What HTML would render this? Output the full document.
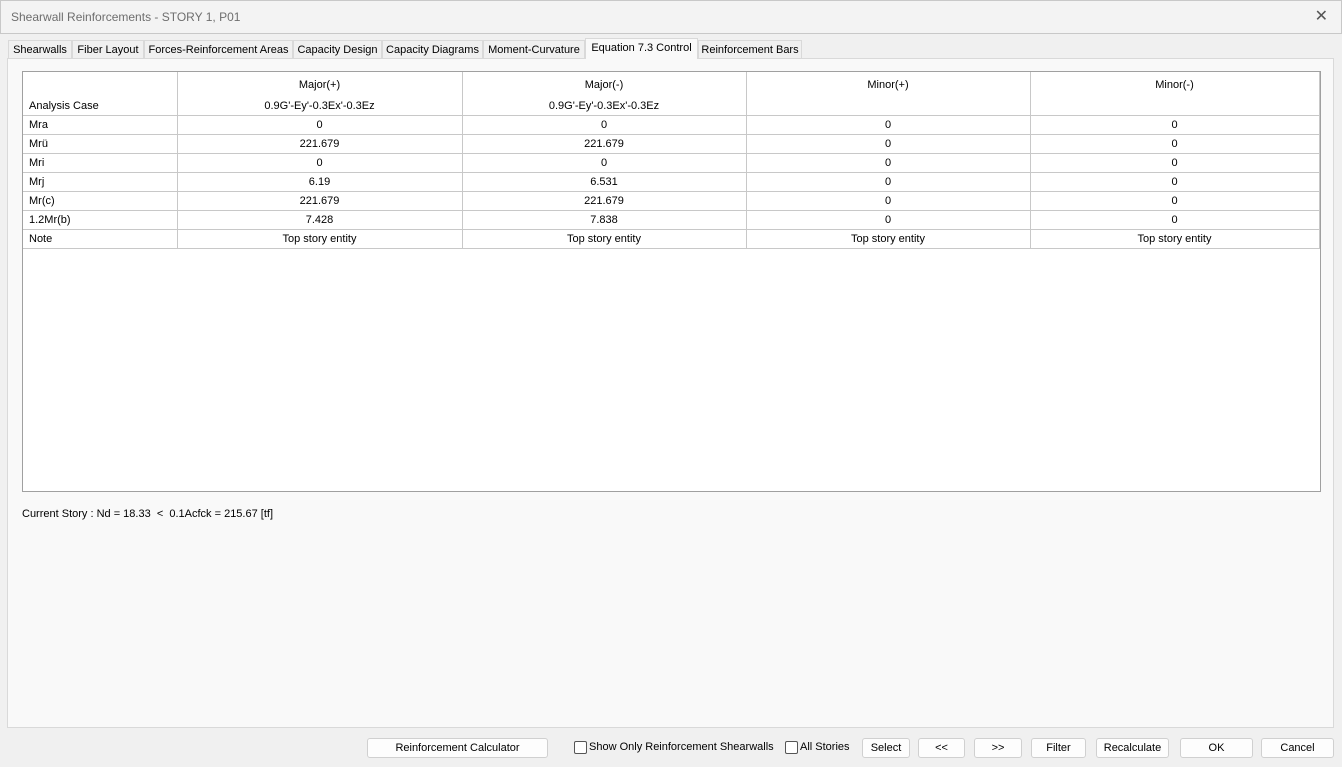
<!DOCTYPE html>
<html><head><style>
body{margin:0;width:1342px;height:767px;background:#f0f0f0;font-family:"Liberation Sans",sans-serif;font-size:11px;color:#000;position:relative;overflow:hidden}
.a{position:absolute}
.title{left:0;top:0;width:1340px;height:32px;background:#f3f3f3;border:1px solid #c8c8c8;}
.title span{position:absolute;left:10px;top:9px;font-size:12px;color:#6e6e6e}
.x{right:14px;top:6px;font-size:16px;color:#555}
.tab{top:40px;height:18px;border:1px solid #d9d9d9;border-bottom:none;background:#f0f0f0;line-height:18px;text-align:center;box-sizing:border-box}
.panel{left:7px;top:58px;width:1327px;height:670px;background:#f9f9f9;border:1px solid #d9d9d9;box-sizing:border-box}
.grid{left:22px;top:71px;width:1299px;height:421px;background:#fff;border:1px solid #a0a0a0;box-sizing:border-box}
table{position:absolute;left:0;top:0;border-collapse:collapse;table-layout:fixed}
td{border:1px solid #c8c8c8;height:18px;padding:0;text-align:center;white-space:nowrap;overflow:hidden}
td:first-child{text-align:left;padding-left:6px}
.btn{top:738px;height:20px;background:#fdfdfd;border:1px solid #d0d0d0;border-radius:3px;box-sizing:border-box;text-align:center;line-height:18px}
.cb{top:741px;width:11px;height:11px;border:1px solid #555;border-radius:2px;background:#fff}
</style></head><body>
<div class="a title"><span>Shearwall Reinforcements - STORY 1, P01</span></div>
<div class="a x">✕</div>
<div class="a panel"></div>
<div class="a tab" style="left:8px;width:64px">Shearwalls</div>
<div class="a tab" style="left:72px;width:72px">Fiber Layout</div>
<div class="a tab" style="left:144px;width:149px">Forces-Reinforcement Areas</div>
<div class="a tab" style="left:293px;width:89px">Capacity Design</div>
<div class="a tab" style="left:382px;width:101px">Capacity Diagrams</div>
<div class="a tab" style="left:483px;width:102px">Moment-Curvature</div>
<div class="a tab" style="left:585px;top:38px;height:21px;width:113px;background:#f9f9f9">Equation 7.3 Control</div>
<div class="a tab" style="left:698px;width:104px">Reinforcement Bars</div>
<div class="a grid">
<table>
<colgroup><col style="width:154px"><col style="width:285px"><col style="width:284px"><col style="width:284px"><col style="width:289px"></colgroup>
<tr><td style="height:25px;border-top:none;border-left:none;border-bottom:none"></td><td style="border-top:none;border-bottom:none">Major(+)</td><td style="border-top:none;border-bottom:none">Major(-)</td><td style="border-top:none;border-bottom:none">Minor(+)</td><td style="border-top:none;border-bottom:none">Minor(-)</td></tr>
<tr><td style="border-left:none;border-top:none">Analysis Case</td><td style="border-top:none">0.9G'-Ey'-0.3Ex'-0.3Ez</td><td style="border-top:none">0.9G'-Ey'-0.3Ex'-0.3Ez</td><td style="border-top:none"></td><td style="border-top:none"></td></tr>
<tr><td style="border-left:none">Mra</td><td>0</td><td>0</td><td>0</td><td>0</td></tr>
<tr><td style="border-left:none">Mrü</td><td>221.679</td><td>221.679</td><td>0</td><td>0</td></tr>
<tr><td style="border-left:none">Mri</td><td>0</td><td>0</td><td>0</td><td>0</td></tr>
<tr><td style="border-left:none">Mrj</td><td>6.19</td><td>6.531</td><td>0</td><td>0</td></tr>
<tr><td style="border-left:none">Mr(c)</td><td>221.679</td><td>221.679</td><td>0</td><td>0</td></tr>
<tr><td style="border-left:none">1.2Mr(b)</td><td>7.428</td><td>7.838</td><td>0</td><td>0</td></tr>
<tr><td style="border-left:none">Note</td><td>Top story entity</td><td>Top story entity</td><td>Top story entity</td><td>Top story entity</td></tr>
</table>
</div>
<div class="a" style="left:22px;top:508px">Current Story : Nd = 18.33 &nbsp;&lt;&nbsp; 0.1Acfck = 215.67 [tf]</div>
<div class="a btn" style="left:367px;width:181px">Reinforcement Calculator</div>
<div class="a cb" style="left:574px"></div><div class="a" style="left:589px;top:741px">Show Only Reinforcement Shearwalls</div>
<div class="a cb" style="left:785px"></div><div class="a" style="left:800px;top:741px">All Stories</div>
<div class="a btn" style="left:862px;width:48px">Select</div>
<div class="a btn" style="left:918px;width:47px">&lt;&lt;</div>
<div class="a btn" style="left:974px;width:48px">&gt;&gt;</div>
<div class="a btn" style="left:1031px;width:55px">Filter</div>
<div class="a btn" style="left:1096px;width:73px">Recalculate</div>
<div class="a btn" style="left:1180px;width:73px">OK</div>
<div class="a btn" style="left:1261px;width:73px">Cancel</div>
</body></html>
